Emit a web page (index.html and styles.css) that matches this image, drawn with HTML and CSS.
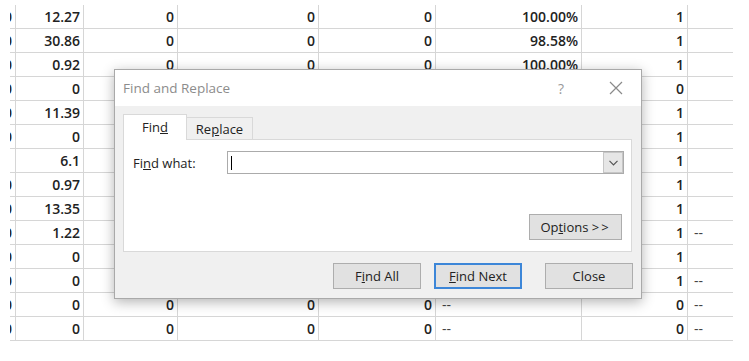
FILE: index.html
```html
<!DOCTYPE html>
<html lang="en">

<head>
    <meta charset="UTF-8">
    <title>Find and Replace</title>
    <link rel="stylesheet" href="styles.css">
</head>

<body>
    <div class="sheet-wrap">
        <div id="sheet" class="sheet"></div>
    </div>

    <div class="dialog">
        <div class="title-bar">
            <span class="title">Find and Replace</span>
            <span class="help">?</span>
            <span class="close-x">
                <svg width="14" height="14" viewBox="0 0 14 14">
                    <path d="M1 1 L13 13 M13 1 L1 13" stroke="#8a8a8a" stroke-width="1.2" fill="none" />
                </svg>
            </span>
        </div>

        <div class="body">
            <div class="tabs">
                <div class="tab active">Fin<u>d</u></div>
                <div class="tab">Re<u>p</u>lace</div>
            </div>

            <div class="panel">
                <div class="find-row">
                    <span class="label">Fi<u>n</u>d what:</span>
                    <div class="combo">
                        <span class="caret"></span>
                        <span class="drop">
                            <svg width="9" height="6" viewBox="0 0 9 6">
                                <path d="M0.5 0.8 L4.5 4.8 L8.5 0.8" stroke="#555" stroke-width="1.2" fill="none" />
                            </svg>
                        </span>
                    </div>
                </div>
                <button class="btn options">Op<u>t</u>ions <span class="arrows">&gt;&gt;</span></button>
            </div>

            <div class="actions">
                <button class="btn">F<u>i</u>nd All</button>
                <button class="btn primary"><u>F</u>ind Next</button>
                <button class="btn close">Close</button>
            </div>
        </div>
    </div>

    <script>
        let sheet = document.getElementById("sheet");

        // columns: cut-off col, B .. H (cells under the dialog left blank)
        let rows = [
            ["0", "12.27", "0", "0", "0", "100.00%", "1", ""],
            ["0", "30.86", "0", "0", "0", "98.58%", "1", ""],
            ["0", "0.92", "0", "0", "0", "100.00%", "1", ""],
            ["0", "0", "", "", "", "", "0", ""],
            ["0", "11.39", "", "", "", "", "1", ""],
            ["0", "0", "", "", "", "", "1", ""],
            ["1", "6.1", "", "", "", "", "1", ""],
            ["0", "0.97", "", "", "", "", "1", ""],
            ["0", "13.35", "", "", "", "", "1", ""],
            ["0", "1.22", "", "", "", "", "1", "--"],
            ["0", "0", "", "", "", "", "1", ""],
            ["0", "0", "", "", "", "", "1", "--"],
            ["0", "0", "0", "0", "0", "--", "0", "--"],
            ["0", "0", "0", "0", "0", "--", "0", "--"],
        ];

        sheet.innerHTML = rows.map(row => row.map((val, i) => {
            let cls = "cell";
            if (i == row.length - 1) cls += " last";
            if (val == "--") cls += " dash";
            return `<div class="${cls}">${val}</div>`;
        }).join("")).join("");
    </script>
</body>

</html>
```

FILE: styles.css
```css
body {
    margin: 0;
    width: 749px;
    height: 361px;
    overflow: hidden;
    position: relative;
    background: #fff;
    font-family: "Open Sans", "Liberation Sans", sans-serif;
}

/* spreadsheet behind the dialog, cropped on the left */
.sheet-wrap {
    margin: 5px 0 0 10px;
    overflow: hidden;
}

.sheet {
    display: grid;
    grid-template-columns: 24px 68px 94px 141px 117px 146px 106px 45px;
    grid-auto-rows: 24px;
    margin-left: -18px;
}

.cell {
    box-sizing: border-box;
    border-right: 1px solid #d6d6d6;
    border-bottom: 1px solid #d6d6d6;
    padding-right: 3px;
    text-align: right;
    font-size: 14px;
    font-weight: 600;
    line-height: 23px;
    color: #222;
    white-space: nowrap;
    overflow: hidden;
}

.cell.last {
    border-right: none;
}

.cell.dash {
    text-align: left;
    padding-left: 6px;
    font-weight: 400;
    color: #444;
}

/* dialog */
.dialog {
    position: absolute;
    left: 114px;
    top: 69px;
    width: 528px;
    height: 230px;
    box-sizing: border-box;
    border: 1px solid #a9a9a9;
    background: #f0f0f0;
    box-shadow: 0 3px 12px rgba(0, 0, 0, 0.3);
    display: flex;
    flex-direction: column;
    font-size: 13px;
    color: #222;
}

.title-bar {
    height: 36px;
    background: #fff;
    display: flex;
    align-items: center;
    padding-left: 8px;
    color: #8c8c8c;
}

.title {
    flex: 1;
    font-size: 13.5px;
}

.help {
    width: 30px;
    margin-right: 15px;
    text-align: center;
    color: #999;
    font-size: 14px;
}

.close-x {
    width: 50px;
    display: flex;
    justify-content: center;
}

.body {
    flex: 1;
    padding: 8px 8px 9px 8px;
    display: flex;
    flex-direction: column;
}

.tabs {
    height: 25px;
    display: flex;
    align-items: flex-end;
}

.tab {
    box-sizing: border-box;
    height: 22px;
    width: 66px;
    border: 1px solid #d9d9d9;
    border-bottom: none;
    border-left: none;
    display: flex;
    align-items: center;
    justify-content: center;
    background: #f0f0f0;
}

.tab.active {
    position: relative;
    z-index: 1;
    width: 64px;
    height: 26px;
    margin-bottom: -1px;
    border-left: 1px solid #d9d9d9;
    background: #fff;
    padding-bottom: 1px;
}

.panel {
    height: 113px;
    box-sizing: border-box;
    margin-right: 1px;
    border: 1px solid #d9d9d9;
    background: #fff;
    padding: 11px 7px 11px 9px;
    display: flex;
    flex-direction: column;
    justify-content: space-between;
}

.find-row {
    display: flex;
    align-items: center;
}

.label {
    width: 94px;
}

.combo {
    flex: 1;
    height: 23px;
    box-sizing: border-box;
    border: 1px solid #ababab;
    display: flex;
    align-items: center;
}

.caret {
    width: 1px;
    height: 14px;
    margin-left: 3px;
    background: #000;
}

.drop {
    margin-left: auto;
    width: 20px;
    height: 100%;
    box-sizing: border-box;
    border: 1px solid #c6c6c6;
    background: #e6e6e6;
    display: flex;
    align-items: center;
    justify-content: center;
}

.btn {
    box-sizing: border-box;
    width: 88px;
    height: 26px;
    padding: 0;
    border: 1px solid #adadad;
    background: #e1e1e1;
    font-family: inherit;
    font-size: 13px;
    color: #222;
}

.btn.options {
    align-self: flex-end;
    width: 93px;
    margin-right: 2px;
}

.arrows {
    letter-spacing: 2px;
}

.actions {
    margin-top: 11px;
    display: flex;
    justify-content: flex-end;
}

.btn.primary {
    margin-left: 13px;
    border: 2px solid #3c86d8;
}

.btn.close {
    margin-left: 23px;
}
```
